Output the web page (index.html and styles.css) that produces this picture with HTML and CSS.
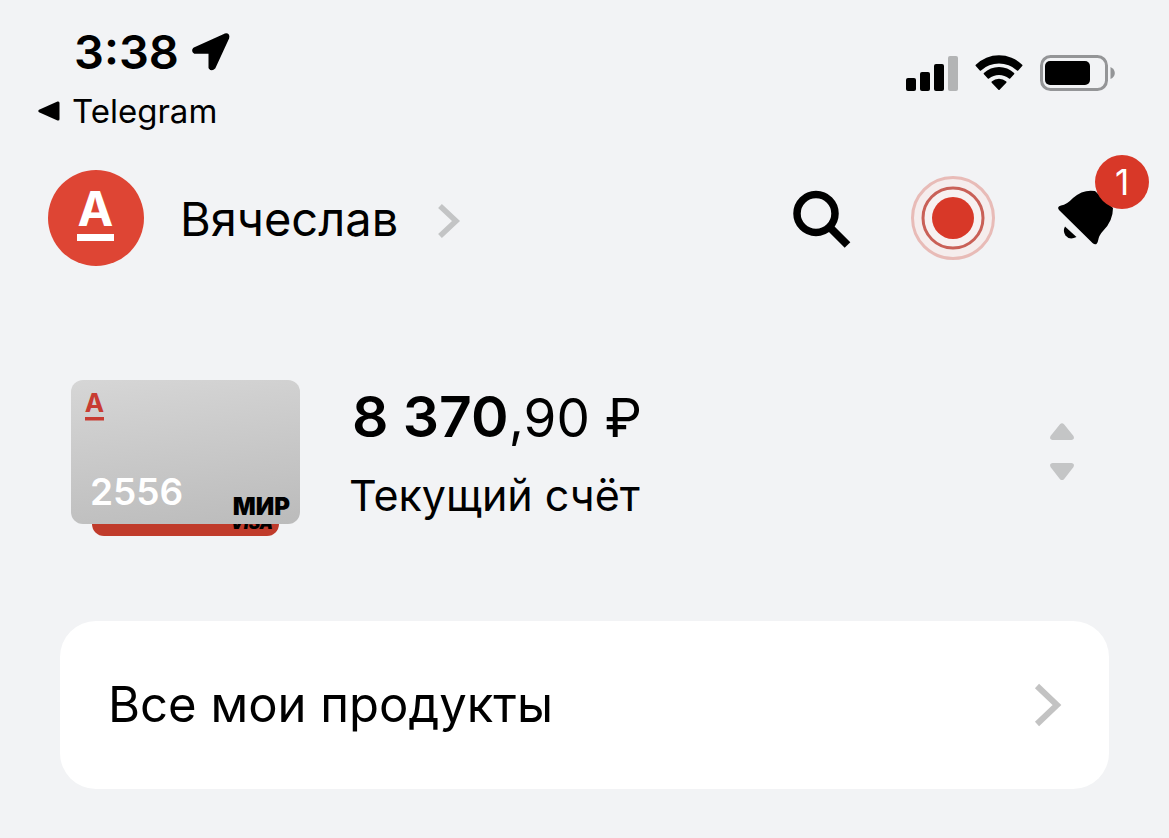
FILE: index.html
```html
<!DOCTYPE html>
<html lang="ru">
<head>
<meta charset="utf-8">
<meta name="viewport" content="width=device-width, initial-scale=1">
<title>Главная</title>
<link rel="stylesheet" href="styles.css">
</head>
<body>
<div class="status">
  <div class="status-left">
    <div class="clock">
      <time>3:38</time>
      <svg class="location" viewBox="0 0 38 38" aria-hidden="true"><path d="M2.500 15.800 33 2Q36.800 1 35.700 4.800L22 34.500Q19.800 37 18 34.500V21Q18 19.300 16.500 19.300H3Q.5 18 2.500 15.800Z" stroke="#000" stroke-width="3" stroke-linejoin="round"/></svg>
    </div>
    <a class="back" href="#">
      <svg class="back-arrow" viewBox="0 0 22 20" aria-hidden="true"><path d="M1 8.800 19.500.5Q21.500 0 21.500 2V18Q21.500 20 19.500 19.500L1 11.200Q-.8 10 1 8.800Z"/></svg>
      Telegram
    </a>
  </div>
  <div class="status-icons">
    <svg class="signal" viewBox="0 0 52 35" aria-hidden="true"><rect x="0" y="22" width="10" height="13" rx="2"/><rect x="14" y="16" width="10" height="19" rx="2"/><rect x="28" y="8" width="10" height="27" rx="2"/><rect x="42" y="0" width="10" height="35" rx="2" fill="#b3b4b5"/></svg>
    <svg class="wifi" viewBox="0 0 48 36" aria-hidden="true"><path d="M.8 9.800A33 33 0 0 1 47.200 9.800Q47.800 10.400 47.200 11L43.200 15.400Q42.600 15.900 42 15.400A27 27 0 0 0 6 15.400Q5.400 15.900 4.800 15.400L.8 11Q.2 10.400.8 9.800Z"/><path d="M8.900 18A22 22 0 0 1 39.100 18Q39.700 18.600 39.100 19.200L35.200 23.600Q34.600 24.100 34 23.600A15.500 15.500 0 0 0 14 23.600Q13.400 24.100 12.800 23.600L8.900 19.200Q8.300 18.600 8.900 18Z"/><path d="M16.700 26.500A11 11 0 0 1 31.300 26.500Q31.900 27.100 31.300 27.700L24.600 34.800Q24 35.300 23.400 34.800L16.700 27.700Q16.100 27.100 16.700 26.500Z"/></svg>
    <svg class="battery" viewBox="0 0 75 36" aria-hidden="true"><rect x="1.500" y="1.500" width="65" height="33" rx="9" fill="none" stroke="#949597" stroke-width="3"/><rect x="5" y="6" width="45" height="24" rx="5"/><path d="M70.500 12Q74.800 14 74.800 18T70.500 24Z" fill="#949597"/></svg>
  </div>
</div>

<header class="header">
  <a class="profile" href="#">
    <svg class="avatar" viewBox="0 0 96 96" aria-hidden="true"><circle cx="48" cy="48" r="48" fill="#de4534"/><text class="logo-letter" x="47.500" y="56" font-size="48">А</text><rect x="29" y="64" width="37" height="7" fill="#fff"/></svg>
    <span class="name">Вячеслав</span>
    <svg class="chevron-small" viewBox="0 0 22 34" aria-hidden="true"><path d="M2 2 18 17 2 32" fill="none" stroke="#c3c4c5" stroke-width="5.500"/></svg>
  </a>
  <div class="actions">
    <button class="icon-button search" type="button" aria-label="Поиск"><svg viewBox="0 0 58 58"><circle cx="23" cy="22.500" r="19" fill="none" stroke="#000" stroke-width="7.500"/><path d="M36.500 36 54.500 54" fill="none" stroke="#000" stroke-width="8"/></svg></button>
    <button class="icon-button stories" type="button" aria-label="Истории"><svg viewBox="0 0 84 84"><circle cx="42" cy="42" r="40.500" fill="#f5eded" stroke="#e8bbb7" stroke-width="3"/><circle cx="42" cy="42" r="30" fill="#f7f1f1" stroke="#c96057" stroke-width="3"/><circle cx="42" cy="42" r="21" fill="#d83828"/></svg></button>
    <button class="icon-button bell" type="button" aria-label="Уведомления: 1">
      <svg viewBox="0 0 56 58"><path d="M1 20Q-1.500 16.500 3 15.500 9 14.500 15 8 25-1 37 1L55 18Q55 31 45 41 41 45 40 51 38.500 56.500 34.500 53Z"/><path d="M7 36.500 18.500 47Q11.500 50.500 7.500 45.500 4.500 41 7 36.500Z"/></svg>
      <span class="badge">1</span>
    </button>
  </div>
</header>

<main class="main">
  <section class="account">
    <div class="cards">
      <div class="card-under"><span class="visa">VISA</span></div>
      <div class="card">
        <svg class="card-logo" viewBox="0 0 20 30" aria-hidden="true"><text class="card-letter" x="9.500" y="19" font-size="26">А</text><rect x="0" y="24" width="19" height="3.500"/></svg>
        <div class="card-bottom"><span class="digits">2556</span><span class="mir">МИР</span></div>
      </div>
    </div>
    <div class="balance">
      <div class="amount"><b>8 370</b>,90 ₽</div>
      <div class="account-name">Текущий счёт</div>
    </div>
    <button class="switcher" type="button" aria-label="Сменить счёт"><svg viewBox="0 0 26 58"><path d="M11 1.200Q13-.7 15 1.200L24.500 13Q26 16.500 22.500 17H3.500Q0 16.500 1.500 13ZM3.500 40H22.500Q26 40.500 24.500 44L15 56.200Q13 58 11 56.200L1.500 44Q0 40.500 3.500 40Z" fill="#c4c5c6"/></svg></button>
  </section>
  <a class="products" href="#">
    <span>Все мои продукты</span>
    <svg class="chevron" viewBox="0 0 26 42" aria-hidden="true"><path d="M2 2 22 21 2 40" fill="none" stroke="#c3c3c3" stroke-width="6"/></svg>
  </a>
</main>
</body>
</html>
```
FILE: styles.css
```css
* {
  box-sizing: border-box;
}

body {
  margin: 0;
  background: #f2f3f5;
  color: #000;
  font-family: Inter, "Noto Sans", sans-serif;
}

a {
  color: inherit;
  text-decoration: none;
}

button {
  padding: 0;
  border: 0;
  background: none;
  font: inherit;
  cursor: pointer;
}

svg {
  display: block;
  flex: none;
  overflow: visible;
}

.status {
  display: flex;
  justify-content: space-between;
  padding: 24px 54px 0 38px;
}

.clock {
  display: flex;
  align-items: center;
  gap: 13px;
  padding-left: 36px;
  font-size: 47px;
  font-weight: 600;
  line-height: 56px;
}

.location {
  width: 38px;
  height: 38px;
}

.back {
  display: flex;
  align-items: center;
  gap: 12px;
  margin-top: 12px;
  font-size: 33px;
  line-height: 38px;
}

.back-arrow {
  width: 22px;
  height: 20px;
}

.status-icons {
  display: flex;
  align-items: center;
  gap: 17px;
  height: 36px;
  margin-top: 31px;
}

.signal {
  width: 52px;
  height: 35px;
}

.wifi {
  width: 48px;
  height: 36px;
}

.battery {
  width: 75px;
  height: 36px;
}

.header {
  display: flex;
  align-items: center;
  justify-content: space-between;
  margin-top: 40px;
  padding: 0 55px 0 48px;
}

.profile {
  display: flex;
  align-items: center;
}

.avatar {
  width: 96px;
  height: 96px;
}

.logo-letter {
  fill: #fff;
  font-weight: 700;
  text-anchor: middle;
}

.name {
  margin-left: 36px;
  padding-top: 2px;
  font-size: 47px;
  line-height: 56px;
}

.chevron-small {
  width: 22px;
  height: 34px;
  margin: 6px 0 0 40px;
}

.actions {
  display: flex;
  align-items: center;
}

.icon-button svg {
  width: 100%;
}

.search {
  width: 58px;
  padding-top: 4px;
}

.stories {
  width: 84px;
  margin: 0 63px 0 60px;
}

.bell {
  position: relative;
  width: 56px;
  padding-top: 2px;
}

.badge {
  position: absolute;
  top: -33px;
  right: -35px;
  width: 54px;
  height: 54px;
  border-radius: 50%;
  background: #d83828;
  color: #fff;
  font-size: 35px;
  line-height: 54px;
  text-align: center;
}

.main {
  padding: 114px 60px 50px;
}

.account {
  display: flex;
  align-items: flex-start;
  padding: 0 34px 0 11px;
}

.cards {
  position: relative;
  flex: none;
  width: 229px;
  padding-bottom: 12px;
}

.card-under {
  position: absolute;
  right: 21px;
  bottom: 0;
  left: 21px;
  height: 40px;
  border-radius: 12px;
  background: #c03b2b;
}

.visa {
  position: absolute;
  right: 6px;
  bottom: 3px;
  font-size: 17px;
  font-style: italic;
  font-weight: 900;
  line-height: 20px;
}

.card {
  position: relative;
  display: flex;
  flex-direction: column;
  justify-content: space-between;
  height: 144px;
  padding: 13px 10px 6px 14px;
  border-radius: 12px;
  background: linear-gradient(172deg, #d6d6d6, #bbb);
}

.card-logo {
  width: 20px;
  height: 30px;
  fill: #c83c32;
}

.card-letter {
  font-weight: 700;
  text-anchor: middle;
}

.card-bottom {
  display: flex;
  align-items: flex-end;
  justify-content: space-between;
}

.digits {
  padding: 0 0 4px 5px;
  color: #fff;
  font-size: 37px;
  font-weight: 600;
  line-height: 44px;
}

.mir {
  font-size: 24px;
  font-weight: 900;
  line-height: 22px;
}

.balance {
  flex: 1;
  margin-left: 49px;
}

.amount {
  padding-left: 3px;
  font-size: 53px;
  line-height: 74px;
}

.amount b {
  font-size: 57px;
  font-weight: 600;
}

.account-name {
  margin-top: 12px;
  font-size: 43px;
  line-height: 56px;
}

.switcher {
  width: 26px;
  margin-top: 43px;
}

.products {
  display: flex;
  align-items: center;
  justify-content: space-between;
  margin-top: 85px;
  padding: 54px 48px;
  border-radius: 36px;
  background: #fff;
  font-size: 49px;
  line-height: 60px;
}

.chevron {
  width: 26px;
  height: 42px;
}
```
